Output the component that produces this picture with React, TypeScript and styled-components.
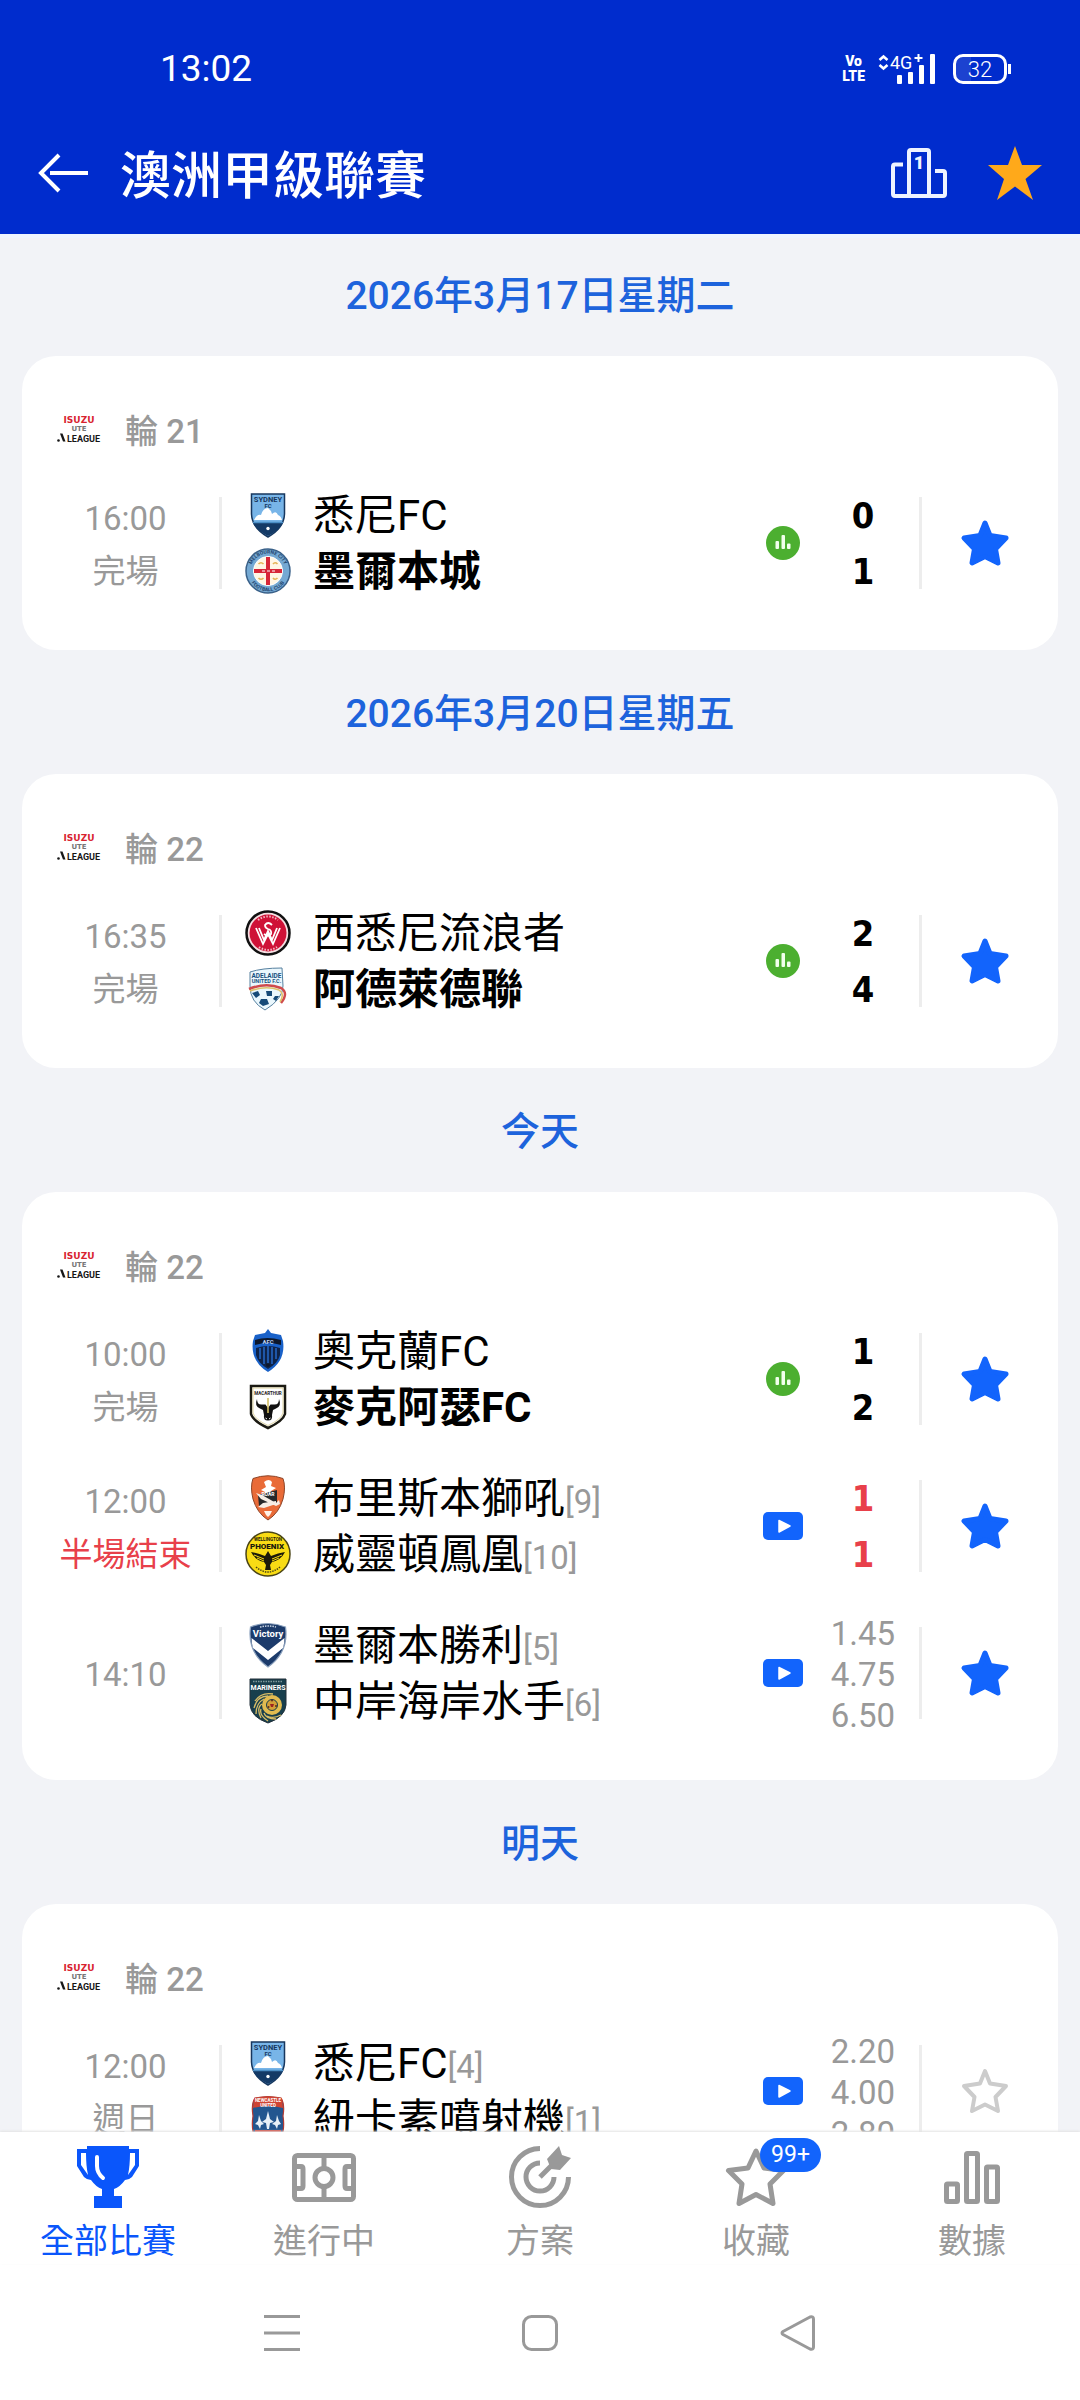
import React, { ReactNode, useState } from "react";
import styled, { createGlobalStyle } from "styled-components";

const GlobalStyle = createGlobalStyle`
  * { box-sizing: border-box; }
  html, body { margin: 0; padding: 0; }
  body {
    background: #f2f3f7;
    font-family: Roboto, "Noto Sans CJK TC", sans-serif;
    color: #000;
  }
  button { margin: 0; padding: 0; border: 0; background: none; font: inherit; color: inherit; cursor: pointer; }
  svg { display: block; overflow: visible; }
`;

/* ---------- shell ---------- */

const Screen = styled.div`
  display: flex;
  flex-direction: column;
  height: 100vh;
`;

const Header = styled.header`
  flex: none;
  background: #002ccd;
  color: #fff;
  box-shadow: 0 4px 0 #eff5fe;
  z-index: 1;
`;

const StatusBar = styled.div`
  display: flex;
  align-items: center;
  justify-content: space-between;
  height: 112px;
  padding: 26px 69px 0 160px;
`;

const Clock = styled.time`
  font-size: 37px;
  line-height: 40px;
`;

const StatusIcons = styled.div`
  display: flex;
  align-items: center;
`;

const Volte = styled.span`
  display: flex;
  flex-direction: column;
  align-items: center;
  margin-right: 14px;
  font-size: 14px;
  font-weight: 900;
  line-height: 15px;
`;

const Battery = styled.span`
  display: flex;
  align-items: center;
  margin-left: 18px;
`;

const BatteryBody = styled.span`
  width: 54px;
  height: 30px;
  border: 3px solid #fff;
  border-radius: 10px;
  background: linear-gradient(90deg, #1c42d0 32%, transparent 32%);
  font-size: 22px;
  font-weight: 300;
  line-height: 25px;
  text-align: center;
`;

const BatteryNub = styled.span`
  width: 3px;
  height: 10px;
  margin-left: 1px;
  background: #fff;
`;

const Toolbar = styled.div`
  display: flex;
  align-items: center;
  height: 122px;
  padding: 0 38px;
`;

const Title = styled.h1`
  flex: 1;
  margin: 0 0 0 31px;
  padding-top: 8px;
  font-size: 51px;
  font-weight: 500;
  line-height: 64px;
`;

const ToolbarActions = styled.div`
  display: flex;
  align-items: center;
  gap: 41px;
`;

const Feed = styled.main`
  flex: 1;
  min-height: 0;
  overflow-y: auto;
  scrollbar-width: none;
`;

/* ---------- match cards ---------- */

const DayTitle = styled.h2`
  margin: 0;
  padding-top: 2px;
  font-size: 39px;
  font-weight: 500;
  line-height: 120px;
  text-align: center;
  color: #1d63dc;
`;

const Card = styled.section`
  margin: 0 22px 2px;
  padding: 35px 10px 34px;
  border-radius: 34px;
  background: #fff;
`;

const Round = styled.div`
  display: flex;
  align-items: center;
  gap: 24px;
  height: 78px;
  padding: 0 0 2px 25px;
  color: #999;
  font-size: 33px;
  font-weight: 500;
`;

const Match = styled.article`
  display: flex;
  align-items: center;
  height: 147px;
`;

const When = styled.div`
  flex: none;
  width: 187px;
  padding-top: 4px;
  font-size: 33px;
  line-height: 53px;
  text-align: center;
  color: #999;
`;

const State = styled.div<{ $live?: boolean }>`
  color: ${(p) => (p.$live ? "#e8404a" : "inherit")};
`;

const Rule = styled.span`
  flex: none;
  width: 3px;
  height: 92px;
  background: #ededed;
`;

const Teams = styled.div`
  flex: 1;
  min-width: 0;
  padding-left: 23px;
`;

const TeamLine = styled.div`
  display: flex;
  align-items: center;
  gap: 22px;
  height: 56px;
`;

const TeamName = styled.span<{ $winner?: boolean }>`
  padding-top: 3px;
  font-size: 42px;
  line-height: 56px;
  font-weight: ${(p) => (p.$winner ? 700 : 400)};
  white-space: nowrap;
`;

const Rank = styled.span`
  font-size: 33px;
  line-height: 33px;
  color: #999;
`;

const Media = styled.span`
  flex: none;
  display: flex;
  justify-content: center;
  width: 60px;
  margin-right: 10px;
`;

const Figures = styled.div`
  flex: none;
  width: 80px;
  margin-right: 16px;
  padding-top: 3px;
  text-align: center;
`;

const Score = styled.div<{ $live?: boolean }>`
  font-family: "DejaVu Sans Condensed", "DejaVu Sans", sans-serif;
  font-size: 36px;
  font-weight: 700;
  line-height: 56px;
  color: ${(p) => (p.$live ? "#e8404a" : "#000")};
`;

const Odd = styled.div`
  font-size: 33px;
  line-height: 41px;
  color: #999;
`;

const FavButton = styled.button`
  flex: none;
  display: flex;
  justify-content: center;
  width: 126px;
`;

/* ---------- bottom bars ---------- */

const Tabs = styled.nav`
  flex: none;
  display: grid;
  grid-template-columns: repeat(5, 1fr);
  height: 132px;
  padding-top: 13px;
  background: #fff;
  box-shadow: 0 -1px 2px #e4e4e4;
  z-index: 1;
`;

const Tab = styled.a<{ $active?: boolean }>`
  display: flex;
  flex-direction: column;
  align-items: center;
  gap: 10px;
  font-size: 34px;
  line-height: 44px;
  text-decoration: none;
  color: ${(p) => (p.$active ? "#0a56fb" : "#999")};
`;

const TabIcon = styled.span`
  position: relative;
  display: flex;
  align-items: center;
  justify-content: center;
  width: 64px;
  height: 64px;
`;

const Badge = styled.span`
  position: absolute;
  top: -7px;
  left: 36px;
  width: 61px;
  border-radius: 17px;
  background: #1264fc;
  color: #fff;
  font-size: 23px;
  line-height: 34px;
  text-align: center;
`;

const SystemNav = styled.div`
  flex: none;
  display: flex;
  align-items: center;
  justify-content: center;
  gap: 222px;
  height: 136px;
  padding-top: 2px;
  background: #fff;
`;

/* ---------- icons ---------- */

const BackIcon = () => (
  <svg width="51" height="40" viewBox="0 0 51 40" fill="none" stroke="#fff" strokeWidth="4">
    <path d="M12 20H50M21 2L3 20L21 38" />
  </svg>
);

const PodiumIcon = () => (
  <svg width="56" height="50" viewBox="0 0 56 50" fill="none" stroke="#eef3ff" strokeWidth="4" strokeLinejoin="round">
    <path d="M12 16.500H4Q2 16.500 2 18.500V46Q2 48 4 48H52Q54 48 54 46V25Q54 23 52 23H44" />
    <path d="M18 48V4Q18 2 20 2H36Q38 2 38 4V48" />
    <text x="28" y="20.500" fontSize="18" fontWeight="900" fill="#eef3ff" stroke="none" textAnchor="middle">1</text>
  </svg>
);

const GoldStar = () => (
  <svg width="54" height="54" viewBox="0 0 54 54">
    <path fill="#ffa91a" d="M27 0L34 19H54L37.500 33L45 54L27 40.500L9 54L16 33L0 19H20Z" />
  </svg>
);

const SignalIcon = () => (
  <svg width="56" height="30" viewBox="0 0 56 30">
    <g fill="none" stroke="#fff" strokeWidth="2.600">
      <path d="M.5 6L4.500 2.500L8.500 6M.5 11L4.500 14.500L8.500 11" />
    </g>
    <text x="11" y="15" fontSize="18" fill="#fff">4G</text>
    <path d="M35.500 4H43.500M39.500 0V8" stroke="#fff" strokeWidth="2" />
    <g fill="#fff">
      <rect x="18" y="21" width="5" height="9" rx="1" />
      <rect x="29" y="18" width="5" height="12" rx="1" />
      <rect x="40" y="11" width="5" height="19" rx="1" />
      <rect x="51" y="0" width="5" height="30" rx="1" />
    </g>
  </svg>
);

const starPoints = "24,4 29,16.5 45,19 34.5,30 37,44 24,37.5 11,44 13.5,30 3,19 19,16.5";

const MatchStar = ({ on }: { on: boolean }) => (
  <svg width="48" height="48" viewBox="0 0 48 48">
    <polygon
      points={starPoints}
      fill={on ? "#1264fc" : "none"}
      stroke={on ? "#1264fc" : "#ccc"}
      strokeWidth={on ? 5 : 4}
      strokeLinejoin="round"
    />
  </svg>
);

const StatsIcon = () => (
  <svg width="34" height="34" viewBox="0 0 34 34">
    <circle cx="17" cy="17" r="17" fill="#4caf30" />
    <g fill="#f1ffec">
      <rect x="9.500" y="15" width="3.500" height="8" rx="1" />
      <rect x="15.500" y="9" width="3.500" height="14" rx="1" />
      <rect x="21" y="17.500" width="3.500" height="5.500" rx="1" />
    </g>
  </svg>
);

const VideoIcon = () => (
  <svg width="40" height="28" viewBox="0 0 40 28">
    <rect width="40" height="28" rx="5" fill="#1264fc" />
    <path d="M16 8.500L27 14L16 20Z" fill="#fff" stroke="#fff" strokeWidth="1.500" strokeLinejoin="round" />
  </svg>
);

const TrophyIcon = () => (
  <svg width="62" height="62" viewBox="0 0 62 62">
    <path
      fill="#0a56fb"
      fillRule="evenodd"
      d="M10 0H52V3H62V20L55 31Q52 34 48 34Q43 41 37 43V50H45V62H17V50H25V43Q19 41 14 34Q10 34 7 31L0 20V3H10ZM4 7V19L11 29Q9 20 9 7ZM58 7H53Q53 20 51 29L58 19Z"
    />
    <path d="M20 11V20Q20 27 26 32" fill="none" stroke="#fff" strokeWidth="4" strokeLinecap="round" />
  </svg>
);

const PitchIcon = () => (
  <svg width="64" height="49" viewBox="0 0 64 49" fill="none" stroke="#999" strokeWidth="5">
    <rect x="2.500" y="2.500" width="59" height="44" rx="3" />
    <path d="M32 3V15M32 34V46M5 13.500H9Q11 13.500 11 16V33Q11 35.500 9 35.500H5M59 13.500H55Q53 13.500 53 16V33Q53 35.500 55 35.500H59" />
    <circle cx="32" cy="24.500" r="9" />
  </svg>
);

const TargetIcon = () => (
  <svg width="64" height="64" viewBox="0 0 64 64" fill="none" stroke="#999" strokeWidth="5">
    <path d="M32 3.500A28.500 28.500 0 1 0 60.500 32" />
    <path d="M32 18A14 14 0 1 0 46 32" />
    <path d="M32 32L44 20" />
    <path d="M39 14L51 1L54 10L63 13L52 25L43 24Z" fill="#999" stroke="none" />
  </svg>
);

const OutlineStar = () => (
  <svg width="60" height="58" viewBox="0 0 60 58">
    <polygon
      points="30,3 38,20 57.500,22.500 44,36 47,55.500 30,46.500 13,55.500 16,36 2.500,22.500 22,20"
      fill="none"
      stroke="#999"
      strokeWidth="5"
      strokeLinejoin="round"
    />
  </svg>
);

const BarsIcon = () => (
  <svg width="56" height="53" viewBox="0 0 56 53" fill="none" stroke="#999" strokeWidth="5">
    <rect x="2.500" y="33" width="11" height="17.500" rx="1" />
    <rect x="22.500" y="2.500" width="11" height="48" rx="1" />
    <rect x="42.500" y="16" width="11" height="34.500" rx="1" />
  </svg>
);

const MenuIcon = () => (
  <svg width="36" height="36" viewBox="0 0 36 36" stroke="#999" strokeWidth="3">
    <path d="M0 1.500H36M0 18H36M0 34.500H36" />
  </svg>
);

const HomeIcon = () => (
  <svg width="36" height="36" viewBox="0 0 36 36" fill="none" stroke="#999" strokeWidth="3">
    <rect x="1.500" y="1.500" width="33" height="33" rx="8" />
  </svg>
);

const PrevIcon = () => (
  <svg width="36" height="36" viewBox="0 0 36 36" fill="none" stroke="#999" strokeWidth="3" strokeLinejoin="round">
    <path d="M3 16.500L30 2Q33.500 1 33.500 4V32Q33.500 35 30 34L3 19.500Q1 18 3 16.500Z" />
  </svg>
);

const LeagueLogo = () => (
  <svg width="44" height="28" viewBox="0 0 44 28" aria-label="A-League">
    <text x="22" y="8" fontSize="9" fontWeight="700" fontFamily="DejaVu Sans" fill="#d8232f" textAnchor="middle">ISUZU</text>
    <text x="22" y="15.500" fontSize="7" fontWeight="700" fontFamily="DejaVu Sans" fill="#777" textAnchor="middle">UTE</text>
    <path d="M3 18.500H5.500L8.500 26.500H6Z" fill="#161616" />
    <circle cx="1.500" cy="25.500" r="1.300" fill="#161616" />
    <text x="10" y="26.500" fontSize="9" fontWeight="700" fill="#161616">LEAGUE</text>
  </svg>
);

/* ---------- club crests ---------- */

const Crest = ({ children }: { children: ReactNode }) => (
  <svg width="46" height="46" viewBox="0 0 46 46" fontFamily="Roboto" aria-hidden="true">{children}</svg>
);

const Sydney = () => (
  <Crest>
    <path d="M6.500 2H39.500V22Q39 36 23 45Q7 36 6.500 22Z" fill="#78b5e8" stroke="#17375e" strokeWidth="1.500" />
    <path d="M7.500 30H38.500Q35 38 23 44Q11 38 7.500 30Z" fill="#143a66" />
    <path d="M9 28Q12 22 16 23Q18 16 23 16Q26 18 27 22Q31 18 33 23Q36 24 37 28Z" fill="#fff" />
    <path d="M8 30.500H38" stroke="#4b8fc6" strokeWidth="1.500" />
    <circle cx="23" cy="36.500" r="1.700" fill="#fff" />
    <text x="23" y="9.500" fontSize="7.500" fontWeight="700" fill="#17375e" textAnchor="middle">SYDNEY</text>
    <text x="23" y="15.500" fontSize="6" fontWeight="700" fill="#17375e" textAnchor="middle">FC</text>
  </Crest>
);

const MelbourneCity = () => (
  <Crest>
    <circle cx="23" cy="23" r="22" fill="#75a9d3" stroke="#3a6189" strokeWidth="1.500" />
    <circle cx="23" cy="23" r="14.500" fill="#fff6e4" stroke="#fff" />
    <path d="M21 9H25V21H37V25H25V37H21V25H9V21H21Z" fill="#d72638" />
    <g fill="none" stroke="#e5b354" strokeWidth="1.600">
      <path d="M13.500 16Q16 13.500 18.500 16M28 16Q30 13.500 32.500 16M13.500 30Q16 32.500 18.500 30M28 30Q30 32.500 32.500 30" />
    </g>
    <path d="M17 23H20M22 23H25M27 23H30" stroke="#fff" />
    <defs>
      <path id="mc-top" d="M5.500 23A17.500 17.500 0 0 1 40.500 23" />
      <path id="mc-low" d="M2.800 23A20.200 20.200 0 0 0 43.200 23" />
    </defs>
    <g fontSize="5" fontWeight="700" fill="#24466e" textAnchor="middle">
      <text><textPath href="#mc-top" startOffset="50%">MELBOURNE CITY</textPath></text>
      <text><textPath href="#mc-low" startOffset="50%">FOOTBALL CLUB</textPath></text>
    </g>
  </Crest>
);

const Wanderers = () => (
  <Crest>
    <circle cx="23" cy="23" r="21.500" fill="#f5dfe2" stroke="#111" strokeWidth="2.500" />
    <circle cx="23" cy="23" r="18.500" fill="#cf1237" />
    <g fill="none" stroke="#fff" strokeWidth="1.800">
      <path d="M11 18L18 34L23 24L28 34L35 18M14 18L19 30L23 21L27 30L32 18" />
      <path d="M27 15Q23 11 20 15Q20 18 23 19Q27 20 26 24Q23 27 19 24" />
    </g>
    <path d="M13 10Q23 3 33 10M14 37Q23 43 32 37" fill="none" stroke="#f3b9c2" strokeWidth="2" strokeDasharray="1.500 1.500" />
  </Crest>
);

const Adelaide = () => (
  <Crest>
    <path d="M5 6Q17 2 37 2L38 20Q38 33 20 44Q5 36 5 20Z" fill="#eaf7fd" stroke="#56809f" strokeWidth="1" />
    <g fontSize="6.500" fontWeight="700" fill="#17517e" textAnchor="middle">
      <text x="21.500" y="11.500">ADELAIDE</text>
      <text x="21.500" y="17" fontSize="5.500">UNITED F.C.</text>
    </g>
    <path d="M4 23Q21 16 36 22Q44 27 36 37" fill="none" stroke="#cf4a4c" strokeWidth="2.500" />
    <path d="M5 25Q21 19 34 24Q40 28 35 36" fill="none" stroke="#dfc168" strokeWidth="1.500" />
    <path d="M7 27L13 25L15 29L11 32ZM21 25L27 25L27 30L22 30ZM16 33L22 33L24 38L18 40L14 37ZM30 30L34 30L31 35L28 33Z" fill="#164a78" />
  </Crest>
);

const Auckland = () => (
  <Crest>
    <path d="M23 1L26 5Q31 6 36 7L38 13Q41 33 23 44Q5 33 8 13L10 7Q15 6 20 5Z" fill="#1961c8" />
    <path d="M10 12Q22 8 36 12V17Q23 13 10 17Z" fill="#0c172b" />
    <path d="M11 20V27Q13 35 23 41Q33 35 35 27V20Q23 16 11 20Z" fill="#0e2349" />
    <path d="M15 20V31M19 19V36M23 18V36M27 19V36M31 20V31" stroke="#2468c8" strokeWidth="1.500" />
    <text x="23" y="16" fontSize="6" fontWeight="700" fill="#b9d2f5" textAnchor="middle">AFC</text>
    <circle cx="23" cy="37" r="2" fill="#0c172b" />
  </Crest>
);

const Macarthur = () => (
  <Crest>
    <path d="M6 2H40V30Q38 37 23 44Q8 37 6 30Z" fill="#fff" stroke="#1b1a12" strokeWidth="2.500" />
    <path d="M8 4H38V29Q36 35.500 23 41.500Q10 35.500 8 29Z" fill="none" stroke="#d9cd8e" strokeWidth=".8" />
    <text x="23" y="10.500" fontSize="4.500" fontWeight="700" fill="#222" textAnchor="middle">MACARTHUR</text>
    <path d="M12 15Q12 21 17 20.500H20.500L23 24L25.500 20.500H29Q34 21 34 15Q37 22 31 24.500L28 26L27 31Q28 36.500 23 36.500Q18 36.500 19 31L18 26L15 24.500Q9 22 12 15Z" fill="#111" />
    <path d="M23 14V29" stroke="#d2bd62" strokeWidth="1.600" />
    <path d="M20.500 34L22 35M25.500 34L24 35" stroke="#fff" />
  </Crest>
);

const Brisbane = () => (
  <Crest>
    <path d="M8 3.500Q23 -2 38 3.500Q41 12 38 24Q34 38 23 45Q12 38 8 24Q5 12 8 3.500Z" fill="#e96b38" stroke="#8d4427" strokeWidth="1" />
    <path d="M19 7Q24 3 27 7L26 11L31 13L26 16L27 22L19 24L20 17L16 15L21 12Z" fill="#fff" />
    <path d="M13 20L32 15L32 28L14 31Z" fill="#26282a" />
    <path d="M11 18L17 20L31 28L34 25L35 29L31 31L16 24ZM13 32L18 28L31 26L31 29L19 33Z" fill="#f6eee6" />
    <text x="23" y="21" fontSize="5" fontWeight="700" fill="#fff" textAnchor="middle">ROAR</text>
    <path d="M19 36H27L25 40L23 42L21 40Z" fill="#fff3e8" />
  </Crest>
);

const Phoenix = () => (
  <Crest>
    <circle cx="23" cy="23" r="22" fill="#f9dc14" stroke="#4b4516" strokeWidth="1.500" />
    <text x="23" y="9.500" fontSize="4.500" fontWeight="700" fill="#22200b" textAnchor="middle">WELLINGTON</text>
    <text x="22" y="17.500" fontSize="8" fontWeight="900" fill="#18170d" textAnchor="middle">PHOENIX</text>
    <path d="M6 21Q13 22 20 25L23 20L26 25Q33 22 40 21Q36 29 27 31L25 34L26 39H20L21 34L19 31Q10 29 6 21Z" fill="#1c1a0a" />
    <path d="M9 24L19 28M12 27L19 30M37 24L27 28M34 27L27 30" stroke="#f9dc14" />
    <path d="M11 36Q23 46 35 36" fill="none" stroke="#4b4516" strokeWidth="1.500" strokeDasharray="1.500 1" />
  </Crest>
);

const Victory = () => (
  <Crest>
    <path d="M5.500 5Q23 -2 40.500 5Q44 30 23 45Q2 30 5.500 5Z" fill="#1c3b6b" stroke="#8aa0bd" strokeWidth="1.200" />
    <path d="M6.500 16L23 29L39.500 16Q39.500 21 38 26L23 38L8 26Q6.500 21 6.500 16Z" fill="#fff" />
    <path d="M15 5Q23 3 31 5" stroke="#c9d5e4" strokeWidth="1.500" strokeDasharray="1.500 1" fill="none" />
    <text x="23" y="15" fontSize="9.500" fontWeight="700" fill="#fff" textAnchor="middle">Victory</text>
  </Crest>
);

const Mariners = () => (
  <Crest>
    <path d="M5 1H41V27Q40 39 23 45Q6 39 5 27Z" fill="#183f4d" stroke="#22303a" strokeWidth="1" />
    <path d="M8 3.500H38" stroke="#7f9a9d" strokeWidth="1.300" strokeDasharray="1.500 1" />
    <text x="23" y="12" fontSize="7" fontWeight="700" fill="#fff" textAnchor="middle">MARINERS</text>
    <circle cx="27" cy="27" r="10" fill="#e1bb50" />
    <g fill="none" stroke="#d9bd66" strokeWidth="1.300">
      <path d="M10 23Q16 14 28 16M9 30Q12 18 23 18M11 36Q11 25 19 21M16 40Q11 30 17 26M23 43Q14 37 16 31M31 41Q21 41 19 35M36 37Q28 41 22 38" />
    </g>
    <circle cx="27" cy="27" r="5.500" fill="#d39f36" stroke="#183f4d" />
    <path d="M25 26H29L28 29H26Z" fill="#9d231f" />
    <circle cx="27" cy="22.500" r="1" fill="#5e2a1c" />
    <circle cx="31" cy="28" r="1" fill="#5e2a1c" />
    <circle cx="23.500" cy="29" r="1" fill="#5e2a1c" />
  </Crest>
);

const Newcastle = () => (
  <Crest>
    <path d="M10 2Q23 -1 36 2Q40 8 38 20Q40 32 36 43Q23 46 10 43Q6 32 8 20Q6 8 10 2Z" fill="#23568f" stroke="#b33a32" strokeWidth="1.200" />
    <path d="M9 2Q23 -1 37 2L38 12Q23 8 8 12Z" fill="#cf4433" />
    <text x="23" y="6" fontSize="4.500" fontWeight="700" fill="#fff" textAnchor="middle">NEWCASTLE</text>
    <text x="23" y="10.500" fontSize="4.500" fontWeight="700" fill="#fff" textAnchor="middle">UNITED</text>
    <path d="M23 15L25 23L29 26L25 27L24 33H22L21 27L17 26L21 23ZM14 19L16 25L19 28L16 29L15 33L13 29L10 28L13 25ZM32 19L34 25L36 28L33 29L32 33L30 29L27 28L31 25Z" fill="#e8f0f7" />
    <path d="M10 34H36V43Q23 46 10 43Z" fill="#cf3e33" />
    <text x="23" y="41.500" fontSize="8" fontWeight="900" fill="#fff" textAnchor="middle">JETS</text>
  </Crest>
);

/* ---------- data ---------- */

interface Team {
  name: string;
  crest: () => ReactNode;
  rank?: number;
  winner?: boolean;
}

interface Fixture {
  time: string;
  state?: string;
  live?: boolean;
  teams: [Team, Team];
  score?: [number, number];
  odds?: string[];
  favourite: boolean;
}

const days: { title: string; round: number; fixtures: Fixture[] }[] = [
  {
    title: "2026年3月17日星期二",
    round: 21,
    fixtures: [
      {
        time: "16:00",
        state: "完場",
        teams: [{ name: "悉尼FC", crest: Sydney }, { name: "墨爾本城", crest: MelbourneCity, winner: true }],
        score: [0, 1],
        favourite: true,
      },
    ],
  },
  {
    title: "2026年3月20日星期五",
    round: 22,
    fixtures: [
      {
        time: "16:35",
        state: "完場",
        teams: [{ name: "西悉尼流浪者", crest: Wanderers }, { name: "阿德萊德聯", crest: Adelaide, winner: true }],
        score: [2, 4],
        favourite: true,
      },
    ],
  },
  {
    title: "今天",
    round: 22,
    fixtures: [
      {
        time: "10:00",
        state: "完場",
        teams: [{ name: "奧克蘭FC", crest: Auckland }, { name: "麥克阿瑟FC", crest: Macarthur, winner: true }],
        score: [1, 2],
        favourite: true,
      },
      {
        time: "12:00",
        state: "半場結束",
        live: true,
        teams: [{ name: "布里斯本獅吼", crest: Brisbane, rank: 9 }, { name: "威靈頓鳳凰", crest: Phoenix, rank: 10 }],
        score: [1, 1],
        favourite: true,
      },
      {
        time: "14:10",
        teams: [{ name: "墨爾本勝利", crest: Victory, rank: 5 }, { name: "中岸海岸水手", crest: Mariners, rank: 6 }],
        odds: ["1.45", "4.75", "6.50"],
        favourite: true,
      },
    ],
  },
  {
    title: "明天",
    round: 22,
    fixtures: [
      {
        time: "12:00",
        state: "週日",
        teams: [{ name: "悉尼FC", crest: Sydney, rank: 4 }, { name: "紐卡素噴射機", crest: Newcastle, rank: 1 }],
        odds: ["2.20", "4.00", "2.80"],
        favourite: false,
      },
    ],
  },
];

const tabs = [
  { label: "全部比賽", icon: TrophyIcon, active: true },
  { label: "進行中", icon: PitchIcon },
  { label: "方案", icon: TargetIcon },
  { label: "收藏", icon: OutlineStar, badge: "99+" },
  { label: "數據", icon: BarsIcon },
];

function MatchRow({ fixture }: { fixture: Fixture }) {
  const [favourite, setFavourite] = useState(fixture.favourite);
  const finished = !!fixture.score && !fixture.live;
  return (
    <Match>
      <When>
        <div>{fixture.time}</div>
        {fixture.state && <State $live={fixture.live}>{fixture.state}</State>}
      </When>
      <Rule />
      <Teams>
        {fixture.teams.map(({ name, crest: ClubCrest, rank, winner }) => (
          <TeamLine key={name}>
            <ClubCrest />
            <TeamName $winner={winner}>
              {name}
              {rank && <Rank>[{rank}]</Rank>}
            </TeamName>
          </TeamLine>
        ))}
      </Teams>
      <Media>{finished ? <StatsIcon /> : <VideoIcon />}</Media>
      <Figures>
        {fixture.score?.map((goals, i) => <Score key={i} $live={fixture.live}>{goals}</Score>)}
        {fixture.odds?.map((odd) => <Odd key={odd}>{odd}</Odd>)}
      </Figures>
      <Rule />
      <FavButton aria-label="收藏" aria-pressed={favourite} onClick={() => setFavourite(!favourite)}>
        <MatchStar on={favourite} />
      </FavButton>
    </Match>
  );
}

export default function App() {
  return (
    <Screen>
      <GlobalStyle />
      <Header>
        <StatusBar>
          <Clock>13:02</Clock>
          <StatusIcons>
            <Volte><span>Vo</span><span>LTE</span></Volte>
            <SignalIcon />
            <Battery>
              <BatteryBody>32</BatteryBody>
              <BatteryNub />
            </Battery>
          </StatusIcons>
        </StatusBar>
        <Toolbar>
          <button aria-label="返回"><BackIcon /></button>
          <Title>澳洲甲級聯賽</Title>
          <ToolbarActions>
            <button aria-label="積分榜"><PodiumIcon /></button>
            <button aria-label="收藏聯賽"><GoldStar /></button>
          </ToolbarActions>
        </Toolbar>
      </Header>
      <Feed>
        {days.map((day) => (
          <React.Fragment key={day.title}>
            <DayTitle>{day.title}</DayTitle>
            <Card>
              <Round>
                <LeagueLogo />
                <span>輪 {day.round}</span>
              </Round>
              {day.fixtures.map((fixture) => (
                <MatchRow key={fixture.time} fixture={fixture} />
              ))}
            </Card>
          </React.Fragment>
        ))}
      </Feed>
      <Tabs>
        {tabs.map(({ label, icon: Icon, active, badge }) => (
          <Tab key={label} href="#" $active={active}>
            <TabIcon>
              <Icon />
              {badge && <Badge>{badge}</Badge>}
            </TabIcon>
            {label}
          </Tab>
        ))}
      </Tabs>
      <SystemNav>
        <button aria-label="最近"><MenuIcon /></button>
        <button aria-label="主頁"><HomeIcon /></button>
        <button aria-label="上一頁"><PrevIcon /></button>
      </SystemNav>
    </Screen>
  );
}
